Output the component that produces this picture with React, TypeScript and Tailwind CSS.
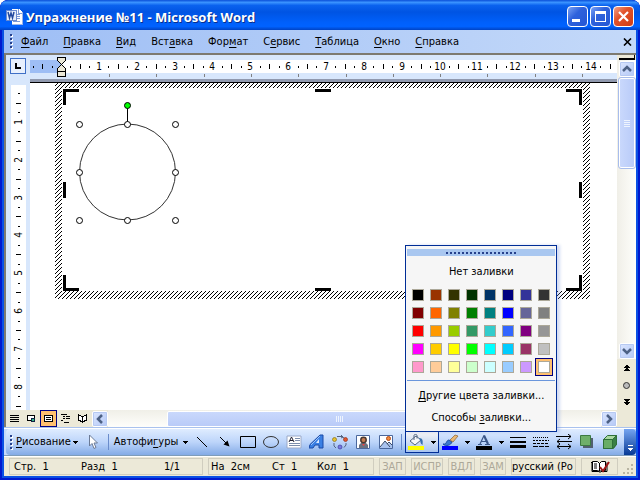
import type { ReactNode } from "react";

const menus = [
  ["", "Ф", "айл"],
  ["", "П", "равка"],
  ["", "В", "ид"],
  ["Вст", "а", "вка"],
  ["Фор", "м", "ат"],
  ["С", "е", "рвис"],
  ["", "Т", "аблица"],
  ["", "О", "кно"],
  ["", "С", "правка"],
] as const;

const swatches = [
  "#000000", "#993300", "#333300", "#003300", "#003366", "#000080", "#333399", "#333333",
  "#800000", "#ff6600", "#808000", "#008000", "#008080", "#0000ff", "#666699", "#808080",
  "#ff0000", "#ff9900", "#99cc00", "#339966", "#33cccc", "#3366ff", "#800080", "#969696",
  "#ff00ff", "#ffcc00", "#ffff00", "#00ff00", "#00ffff", "#00ccff", "#993366", "#c0c0c0",
  "#ff99cc", "#ffcc99", "#ffff99", "#ccffcc", "#ccffff", "#99ccff", "#cc99ff", "#ffffff",
];

// pixels per centimetre on both rulers
const CM = 37.85;

function Hot({ parts }: { parts: readonly [string, string, string] }) {
  return (
    <>
      {parts[0]}
      <span className="underline underline-offset-2">{parts[1]}</span>
      {parts[2]}
    </>
  );
}

function Caret() {
  return (
    <svg width="5" height="3" shapeRendering="crispEdges" aria-hidden>
      <path d="M0 0h5v1h-1v1h-1v1h-1v-1h-1v-1h-1z" />
    </svg>
  );
}

function TitleBar() {
  return (
    <header className="flex h-[30px] shrink-0 items-center gap-[3px] rounded-t-lg bg-[linear-gradient(#0a4fd8,#3a93ff_8%,#0a62ee_18%,#0054e3_40%,#0060fb_75%,#0062ff_88%,#0043c4)] px-1.5 pt-[3px]">
      <svg width="17" height="17" viewBox="0 0 17 17" shapeRendering="crispEdges" aria-hidden>
        <path d="M6 1h7l3 3v12H6z" fill="#fff" />
        <path d="M12 1v4h4M10 6h4M10 8h4M10 10h4M7 13h7" fill="none" stroke="#7d9ad6" />
        <path d="M16 4v12H6" fill="none" stroke="#9db5e8" />
        <rect x="0" y="2" width="10" height="10" fill="#e6eefb" stroke="#6a8ad0" />
        <path d="M2 4l1.500 6L5 5l1.500 5L8 4" fill="none" stroke="#244aa0" strokeWidth="1.500" shapeRendering="auto" />
      </svg>
      <h1 className="grow truncate font-['Open_Sans','Noto_Sans',sans-serif] text-[13px] leading-5 font-bold text-white [text-shadow:1px_1px_0_#0a2f8c]">
        Упражнение №11 - Microsoft Word
      </h1>
      <div className="flex gap-0.5">
        <button type="button" aria-label="Свернуть" className="flex size-[21px] items-end rounded-sm border border-white bg-[linear-gradient(135deg,#7aa2f5,#2f62dc_40%,#2456d4)] p-1">
          <span className="h-[3px] w-2 bg-white" />
        </button>
        <button type="button" aria-label="Развернуть" className="flex size-[21px] items-center justify-center rounded-sm border border-white bg-[linear-gradient(135deg,#7aa2f5,#2f62dc_40%,#2456d4)]">
          <span className="size-[11px] border border-t-[3px] border-white" />
        </button>
        <button type="button" aria-label="Закрыть" className="flex size-[21px] items-center justify-center rounded-sm border border-white bg-[linear-gradient(135deg,#f0a088,#e2532b_40%,#cf3c12)]">
          <svg width="13" height="13" aria-hidden>
            <path d="M2 2l9 9M11 2l-9 9" stroke="#fff" strokeWidth="2.200" />
          </svg>
        </button>
      </div>
    </header>
  );
}

function Grip() {
  return (
    <svg width="4" height="15" className="shrink-0" shapeRendering="crispEdges" aria-hidden>
      {[0, 4, 8, 12].map((y) => (
        <g key={y}>
          <rect x="1" y={y + 1} width="2" height="2" fill="#fff" />
          <rect x="0" y={y} width="2" height="2" fill="#27418c" />
        </g>
      ))}
    </svg>
  );
}

function MenuBar() {
  return (
    <nav className="flex h-[23px] shrink-0 items-center bg-linear-to-r from-[#9ebef5] to-[#c4d9f9] pl-1.5">
      <Grip />
      <div className="flex grow gap-[15px] pl-[7px]">
        {menus.map((m) => (
          <button type="button" key={m.join("")}>
            <Hot parts={m} />
          </button>
        ))}
      </div>
      <button type="button" aria-label="Закрыть окно" className="px-1">
        <svg width="9" height="8" aria-hidden>
          <path d="M1 0.500l7 7M8 0.500l-7 7" stroke="#000" strokeWidth="1.600" />
        </svg>
      </button>
    </nav>
  );
}

function HorizontalRuler() {
  const quarters = Array.from({ length: 62 }, (_, i) => i - 3).filter((q) => q !== 0);
  return (
    <svg className="block h-6 w-full" shapeRendering="crispEdges">
      <rect y="5" width="100%" height="13" fill="#fff" />
      <rect y="5" width="32" height="13" fill="#9ebef5" />
      {quarters.map((q) => {
        const x = Math.round(31 + (q * CM) / 4);
        if (q % 4 === 0) {
          return (
            <text key={q} x={x} y="15" textAnchor="middle" fontSize="10">
              {q / 4}
            </text>
          );
        }
        return q % 2 === 0 ? (
          <rect key={q} x={x} y="9" width="1" height="5" />
        ) : (
          <rect key={q} x={x} y="11" width="1" height="2" />
        );
      })}
      {Array.from({ length: 11 }, (_, i) => (
        <rect key={i} x={Math.round(79 + i * 47.3)} y="19" width="1" height="3" fill="#808080" />
      ))}
      <g fill="#ece9d8" stroke="#000">
        <path d="M27.500 2.500h8v3l-4 4l-4-4z" />
        <path d="M27.500 16.500v-3l4-4l4 4v3z" />
        <rect x="27.500" y="16.500" width="8" height="5" />
      </g>
    </svg>
  );
}

function VerticalRuler() {
  const quarters = Array.from({ length: 34 }, (_, i) => i + 1);
  return (
    <svg className="block w-[15px] grow bg-white" shapeRendering="crispEdges">
      {quarters.map((q) => {
        const y = Math.round((q * CM) / 4) - 1;
        if (q % 4 === 0) {
          return (
            <text key={q} transform={`translate(11 ${y}) rotate(-90)`} textAnchor="middle" fontSize="10">
              {q / 4}
            </text>
          );
        }
        return q % 2 === 0 ? (
          <rect key={q} x="5" y={y} width="5" height="1" />
        ) : (
          <rect key={q} x="7" y={y} width="2" height="1" />
        );
      })}
    </svg>
  );
}

function Drawing() {
  const handles = [
    [49, 41], [97, 41], [145, 41],
    [49, 89], [145, 89],
    [49, 137], [97, 137], [145, 137],
  ];
  return (
    <svg className="block size-full" aria-label="Полотно">
      <defs>
        <pattern id="hatch" width="4" height="4" patternUnits="userSpaceOnUse" shapeRendering="crispEdges">
          <path d="M3 0h1v1h-1zM2 1h1v1h-1zM1 2h1v1h-1zM0 3h1v1h-1z" />
        </pattern>
      </defs>
      <path d="M25 0h535v216H25zM32 5v203h521V5z" fill="url(#hatch)" fillRule="evenodd" />
      <path
        d="M33 6h16v3H36v13h-3zM285 6h16v3h-16zM552 6h-16v3h13v13h3zM33 99h3v16h-3zM549 99h3v16h-3zM33 208h16v-3H36v-13h-3zM285 205h16v3h-16zM552 208h-16v-3h13v-13h3z"
        shapeRendering="crispEdges"
      />
      <circle cx="97.500" cy="89" r="48" fill="#fff" stroke="#333" />
      <path d="M97.500 24v17" stroke="#000" />
      <circle cx="97.500" cy="22.500" r="3" fill="#0f0" stroke="#000" />
      {handles.map(([x, y]) => (
        <circle key={`${x}-${y}`} cx={x + 0.5} cy={y + 0.5} r="3" fill="#fff" stroke="#000" />
      ))}
    </svg>
  );
}

function ScrollButton({ label, d }: { label: string; d: string }) {
  return (
    <button type="button" aria-label={label} className="flex size-4 shrink-0 items-center justify-center rounded-xs border border-white bg-linear-to-br from-[#dbe6ff] to-[#b4c8f6] outline-1 -outline-offset-2 outline-[#b6c9f2]">
      <svg width="10" height="10" aria-hidden>
        <path d={d} fill="none" stroke="#4d6185" strokeWidth="2.500" />
      </svg>
    </button>
  );
}

function VerticalScroll() {
  return (
    <div className="flex w-[19px] shrink-0 flex-col items-center bg-[#ece9d8]">
      <div className="h-[5px] w-4 shrink-0 border-r border-b-2 border-black bg-[#ece9d8]" />
      <div className="flex w-full grow flex-col items-center bg-linear-to-r from-[#f0efe8] to-[#fefefb] pt-px">
        <ScrollButton label="Вверх" d="M1 7l4-4l4 4" />
        <div className="mt-px flex h-[90px] w-4 flex-col items-center justify-center gap-px rounded-xs border border-white bg-linear-to-r from-[#c9d8fc] to-[#b9cbf8] outline-1 outline-[#a8bdec]">
          {[0, 1, 2, 3].map((i) => (
            <span key={i} className="h-px w-1.5 bg-[#eef4fe]" />
          ))}
        </div>
        <div className="grow" />
        <ScrollButton label="Вниз" d="M1 3l4 4l4-4" />
      </div>
      <div className="flex h-[51px] shrink-0 flex-col items-center gap-2.5 pt-1.5">
        <button type="button" aria-label="Предыдущая страница">
          <svg width="6" height="7" className="block" shapeRendering="crispEdges"><path d="M2 0h2v1h1v1h1v1H0v-1h1v-1h1zM2 3h2v1h1v1h1v1H0v-1h1v-1h1z" /></svg>
        </button>
        <button type="button" aria-label="Выбор объекта перехода">
          <svg width="7" height="7" className="block"><circle cx="3.500" cy="3.500" r="3" fill="#bbb" stroke="#333" /></svg>
        </button>
        <button type="button" aria-label="Следующая страница">
          <svg width="6" height="7" className="block" shapeRendering="crispEdges"><path d="M0 0h6v1h-1v1h-1v1H2v-1h-1v-1H0zM0 3h6v1h-1v1h-1v1H2v-1h-1v-1H0z" /></svg>
        </button>
      </div>
    </div>
  );
}

function ViewButton({ label, active, children }: { label: string; active?: boolean; children: ReactNode }) {
  return (
    <button
      type="button"
      aria-label={label}
      className={`flex size-[17px] items-center justify-center ${active ? "border border-[#000080] bg-[#ffc06f]" : ""}`}
    >
      <svg width="9" height="9" shapeRendering="crispEdges" fill="none" stroke="#000">{children}</svg>
    </button>
  );
}

function HorizontalScroll() {
  return (
    <div className="flex h-[17px] shrink-0 items-center bg-[#ece9d8]">
      <div className="flex w-[86px] shrink-0">
        <ViewButton label="Обычный"><path d="M0 1.500h9M0 3.500h9M0 5.500h9M0 7.500h9" /></ViewButton>
        <ViewButton label="Веб-документ">
          <path d="M.5 1.500h7v5h-7z" fill="#fff" />
          <path d="M4.500 4.500h3v3h-3z" fill="#3b8" stroke="#124" />
        </ViewButton>
        <ViewButton label="Разметка страницы" active><path d="M.5 1.500h8v6h-8z" fill="#fff" /><path d="M2 3.500h5M2 5.500h5" /></ViewButton>
        <ViewButton label="Структура"><path d="M0 .5h6M2 2.500h2M5 2.500h4M2 4.500h2M5 4.500h4M0 6.500h2M3 8.500h5" /></ViewButton>
        <ViewButton label="Режим чтения"><path d="M.5 1v5l4 2l4-2v-5l-4 1.500z" fill="#fff" /><path d="M4.500 2v6" /></ViewButton>
      </div>
      <ScrollButton label="Влево" d="M7 1L3 5l4 4" />
      <div className="flex h-full grow items-center bg-linear-to-b from-[#f0efe8] to-[#fefefb]">
        <div className="ml-[12%] flex h-4 w-[70%] items-center justify-center gap-px rounded-xs border border-white bg-linear-to-b from-[#c9d8fc] to-[#b9cbf8]">
          {[0, 1, 2, 3].map((i) => (
            <span key={i} className="h-1.5 w-px bg-[#eef4fe]" />
          ))}
        </div>
      </div>
      <ScrollButton label="Вправо" d="M3 1l4 4l-4 4" />
      <div className="w-[19px] shrink-0" />
    </div>
  );
}

function FillPalette() {
  return (
    <div className="absolute bottom-full -left-px z-10 w-[152px] border border-[#002d96] bg-[#f6f6f6] p-px pb-[5px] text-center shadow-[3px_0_3px_#7a96df55]">
      <div className="mt-0.5 flex h-[7px] items-center justify-center gap-0.5 bg-[#a9c7f0]">
        {Array.from({ length: 18 }, (_, i) => (
          <span key={i} className="size-0.5 bg-[#27418c]" />
        ))}
      </div>
      <button type="button" className="mt-2 block h-4 w-full leading-4">Нет заливки</button>
      <div className="mt-[6px] grid grid-cols-8 px-0.5">
        {swatches.map((color) => (
          <button
            type="button"
            key={color}
            aria-label={color}
            className={`flex size-[18px] items-center justify-center ${color === "#ffffff" ? "border border-[#000080] bg-[#ffc06f]" : ""}`}
          >
            <span className="size-3 border border-[#aca899]" style={{ backgroundColor: color }} />
          </button>
        ))}
      </div>
      <div className="mt-1 h-px bg-[#6a96dc]" />
      <button type="button" className="mt-[7px] block h-4 w-full leading-4"><Hot parts={["", "Д", "ругие цвета заливки..."]} /></button>
      <button type="button" className="mt-1.5 block h-4 w-full leading-4"><Hot parts={["Способы ", "з", "аливки..."]} /></button>
    </div>
  );
}

function Tool({ label, children }: { label: string; children: ReactNode }) {
  return (
    <button type="button" aria-label={label} className="flex h-5 w-[23px] shrink-0 items-center justify-center">
      <svg width="16" height="16" viewBox="0 0 16 16" fill="none" stroke="#000">{children}</svg>
    </button>
  );
}

function ColorTool({ label, bar, children }: { label: string; bar: string; children: ReactNode }) {
  return (
    <button type="button" aria-label={label} className="flex h-5 w-8 shrink-0 items-center gap-1.5 pl-0.5">
      <svg width="17" height="16" viewBox="0 0 17 16" fill="none">
        {children}
        <rect y="12" width="16" height="4" fill={bar} />
      </svg>
      <Caret />
    </button>
  );
}

function DrawingToolbar() {
  return (
    <div className="flex h-[26px] shrink-0 bg-[#c4d9f9] pl-0.5">
      <div className="flex grow items-center rounded-l-sm bg-linear-to-b from-[#dfecff] via-[#bdd5fa] to-[#84abe6] pl-1">
        <Grip />
        <button type="button" className="mr-1 flex shrink-0 items-center gap-0.5 pl-0.5">
          <span><Hot parts={["", "Р", "исование"]} /></span>
          <Caret />
        </button>
        <Tool label="Выбор объектов">
          <path d="M4.500 1v11l2.500-2.500l2 5l2-1l-2-4.500h3.500z" fill="#fff" stroke="#6b7a96" />
        </Tool>
        <div className="mr-[5px] ml-[3px] h-4 w-px shrink-0 bg-[#6a8ccb]" />
        <button type="button" className="mr-0.5 flex shrink-0 items-center gap-[5px]">
          <span><Hot parts={["Автофи", "г", "уры"]} /></span>
          <Caret />
        </button>
        <Tool label="Линия"><path d="M3 3l10 10" /></Tool>
        <Tool label="Стрелка"><path d="M3 3l6 6" /><path d="M12.500 12.500l-6-2l4-4z" fill="#000" stroke="none" /></Tool>
        <Tool label="Прямоугольник"><path d="M.5 2.500h15v11H.5z" /></Tool>
        <Tool label="Овал"><ellipse cx="8" cy="8" rx="7.500" ry="5.500" stroke="#333" /></Tool>
        <Tool label="Надпись">
          <path d="M1 2h14v12H1z" fill="#fff" stroke="#9aa9c8" />
          <path d="M9 4.500h5M9 6.500h5M3 9.500h11M3 11.500h11" stroke="#7c8dab" />
          <path d="M3 8l2.500-5L8 8M4 6.500h3" stroke="#223" />
        </Tool>
        <Tool label="WordArt">
          <path d="M1 10.500l10-9.500h3v13h-4v-3H6l-2 3H0z" fill="#3a80e4" stroke="#1b4aa6" />
          <path d="M7 9l3-4v4z" fill="#dce9ff" stroke="none" />
          <path d="M2 11l9-9" stroke="#9dc4fa" />
        </Tool>
        <Tool label="Диаграмма">
          <path d="M5 2.500h5l2 1.500M2 9v3l2 2M14 9v2l-2 2.500M9 1l2 2-2 1" stroke="#54627e" />
          <circle cx="2.500" cy="5.500" r="2" fill="#e5c32e" stroke="#8b7118" strokeWidth=".7" />
          <circle cx="13.500" cy="5.500" r="2" fill="#e0552f" stroke="#96331a" strokeWidth=".7" />
          <circle cx="8" cy="13" r="2" fill="#7878e0" stroke="#3c3c9c" strokeWidth=".7" />
        </Tool>
        <Tool label="Картинка">
          <path d="M1.500 1.500h13v13h-13z" fill="#fff" stroke="#4a679c" />
          <path d="M4 14v-3l2-2h5l2 2v3z" fill="#6c7280" stroke="none" />
          <circle cx="8.500" cy="6" r="2.700" fill="#c57b50" stroke="#493832" strokeWidth="1.500" />
          <path d="M7 10l1.500 2L10 10" fill="#e44" stroke="none" />
        </Tool>
        <Tool label="Рисунок">
          <path d="M1.500 1.500h13v13h-13z" fill="#fff" stroke="#4a679c" />
          <path d="M2 13l5-6l3 3l2-2l2 3v3H2z" fill="#a9c3ee" stroke="none" />
          <path d="M2 13l5-6l5 6M9 10l2-2l3 3" stroke="#3d4c66" />
          <circle cx="10.500" cy="4.500" r="2" fill="#f08a3c" stroke="#b54a17" />
        </Tool>
        <div className="mr-[3px] ml-1 h-4 w-px shrink-0 bg-[#6a8ccb]" />
        <div className="relative mr-px mb-0.5 h-[21px] w-[34px] shrink-0 self-end border border-t-0 border-[#002d96] bg-linear-to-b from-[#f6f6f6] to-[#a9c5f0]">
          <ColorTool label="Цвет заливки" bar="#ffff00">
            <path d="M2 7l6-5l5 4l-6 5z" fill="#f5f7fa" stroke="#526580" />
            <path d="M6 6V1.500c0-1.500 3-1.500 3 0v3" stroke="#526580" />
            <path d="M11 4c4 0 4 3 3.500 7c-2-1-2-3-2.500-5z" fill="#356fae" />
          </ColorTool>
          <FillPalette />
        </div>
        <div className="flex shrink-0 gap-0.5">
          <ColorTool label="Цвет линий" bar="#0000ff">
            <path d="M1 10c4 1 3-4 6-4l3 2c-1 3-6 5-9 2z" fill="#3c78d0" stroke="#1d4fa3" />
            <path d="M8 6l5-5l3 1l-5 6z" fill="#e9b873" stroke="#8a6032" strokeWidth=".7" />
          </ColorTool>
          <ColorTool label="Цвет шрифта" bar="#000000">
            <path d="M2 10.500h4M9 10.500h5M4 10l4-8.500M5.500 7.500h5" stroke="#3a5688" strokeWidth="1.200" />
            <path d="M8 1.500L12 10" stroke="#3a5688" strokeWidth="2.200" />
          </ColorTool>
        </div>
        <Tool label="Тип линии">
          <path d="M0 3.500h16" />
          <path d="M0 8h16" strokeWidth="2" />
          <path d="M0 12.500h16" strokeWidth="3" />
        </Tool>
        <Tool label="Тип штриха">
          <path d="M0 3.500h16" strokeDasharray="1 1" />
          <path d="M0 6.500h16" strokeDasharray="2 1" />
          <path d="M0 9.500h16" strokeDasharray="3 1" />
          <path d="M0 12.500h16" strokeDasharray="5 1" />
        </Tool>
        <Tool label="Вид стрелки">
          <path d="M0 2.500h15M1 7.500h15M1 12.500h14M12 0l3 2.500L12 5M4 5L1 7.500L4 10M4 10l-3 2.500L4 15M12 10l3 2.500l-3 2.500" />
        </Tool>
        <Tool label="Тень">
          <path d="M4 4h10v10H4z" fill="#52606f" stroke="none" />
          <path d="M1.500 1.500h10v10h-10z" fill="#6fb06a" stroke="#3d7a42" />
        </Tool>
        <Tool label="Объем">
          <path d="M1.500 5.500l4-4h9v9l-3 4h-10z" fill="#a9d8a0" stroke="#2f6f38" />
          <path d="M1.500 5.500h9v9h-9z" fill="#69ad66" stroke="#2f6f38" />
          <path d="M10.500 5.500l4-4v9l-4 4z" fill="#3a8045" stroke="#2f6f38" />
        </Tool>
      </div>
      <button type="button" aria-label="Параметры панели" className="flex w-3 shrink-0 flex-col items-center justify-end gap-0.5 rounded-r-sm bg-linear-to-b from-[#75a5f1] to-[#053995] pb-1">
        <span className="h-px w-[5px] bg-white" />
        <svg width="5" height="3" shapeRendering="crispEdges" aria-hidden>
          <path d="M0 0h5v1h-1v1h-1v1h-1v-1h-1v-1h-1z" fill="#fff" />
        </svg>
      </button>
    </div>
  );
}

function StatusBar() {
  const panel = "flex h-[17px] shrink-0 items-center border border-[#d0cdbf]";
  const mode = `${panel} justify-center text-[#aca899]`;
  return (
    <footer className="flex h-[19px] shrink-0 items-center gap-[5px] bg-[#ece9d8] pl-[5px]">
      <div className={`${panel} w-[194px] px-1`}>
        <span className="w-[67px]">Стр.&nbsp; 1</span>
        <span className="grow">Разд&nbsp; 1</span>
        <span className="pr-[18px]">1/1</span>
      </div>
      <div className={`${panel} w-[166px] px-0.5`}>
        <span className="w-[61px]">На&nbsp; 2см</span>
        <span className="w-[45px]">Ст&nbsp; 1</span>
        <span>Кол&nbsp; 1</span>
      </div>
      <div className={`${mode} w-[27px]`}>ЗАП</div>
      <div className={`${mode} w-8`}>ИСПР</div>
      <div className={`${mode} w-[27px]`}>ВДЛ</div>
      <div className={`${mode} w-[26px]`}>ЗАМ</div>
      <div className={`${panel} w-[65px]`}>русский (Ро</div>
      <div className={`${panel} w-[37px] justify-center`}>
        <svg width="20" height="14" aria-hidden>
          <path d="M1 2.500h1v9h7l1 1l1-1h6v-9" fill="none" stroke="#000" />
          <path d="M2.500 1.500h5l2 2l2-2h4v9h-4l-2 1l-2-1h-5z" fill="#fff" stroke="#000" />
          <path d="M9.500 3v8M4 4h3M4 6h3M4 8h3" stroke="#000" />
          <path d="M10 7l3 4l6-9" fill="none" stroke="#a01818" strokeWidth="2" />
        </svg>
      </div>
      <svg className="mr-px ml-auto self-end" width="12" height="12" fill="#b8b4a2" shapeRendering="crispEdges" aria-hidden>
        <path d="M8 0h2v2H8zM4 4h2v2H4zM8 4h2v2H8zM0 8h2v2H0zM4 8h2v2H4zM8 8h2v2H8z" />
      </svg>
    </footer>
  );
}

export default function App() {
  return (
    <div className="flex h-screen flex-col overflow-hidden rounded-t-lg bg-[#0a50e4] font-['DejaVu_Sans_Condensed','DejaVu_Sans',sans-serif] text-[11px] leading-4 whitespace-nowrap text-black shadow-[inset_0_0_0_2px_#0019cf]">
      <TitleBar />
      <div className="mx-1 mb-1 flex min-h-0 grow flex-col">
        <MenuBar />
        <main className="flex min-h-0 grow flex-col border-t-2 border-l-2 border-[#7d7a70]">
          <div className="flex min-h-0 grow">
            <div className="flex w-6 shrink-0 flex-col items-center bg-[#d8e7fc]">
              <button type="button" aria-label="Позиция табуляции" className="mt-[3px] mb-[11px] flex size-4 shrink-0 items-center justify-center border border-[#3f6fc6] bg-[#e8f0fd]">
                <span className="size-1.5 border-b-2 border-l-2 border-black" />
              </button>
              <VerticalRuler />
            </div>
            <div className="flex min-w-0 grow flex-col bg-white">
              <div className="h-[28px] shrink-0 border-b border-black bg-[#9099ae]">
                <div className="h-6 bg-[#d8e7fc]">
                  <HorizontalRuler />
                </div>
              </div>
              <div className="min-h-0 grow">
                <Drawing />
              </div>
            </div>
            <VerticalScroll />
          </div>
          <HorizontalScroll />
        </main>
        <div className="h-0.5 shrink-0 border-b border-white bg-[#a9c2ee]" />
        <DrawingToolbar />
        <div className="h-0.5 shrink-0 border-t border-[#7f9db9] bg-white" />
        <StatusBar />
      </div>
    </div>
  );
}
